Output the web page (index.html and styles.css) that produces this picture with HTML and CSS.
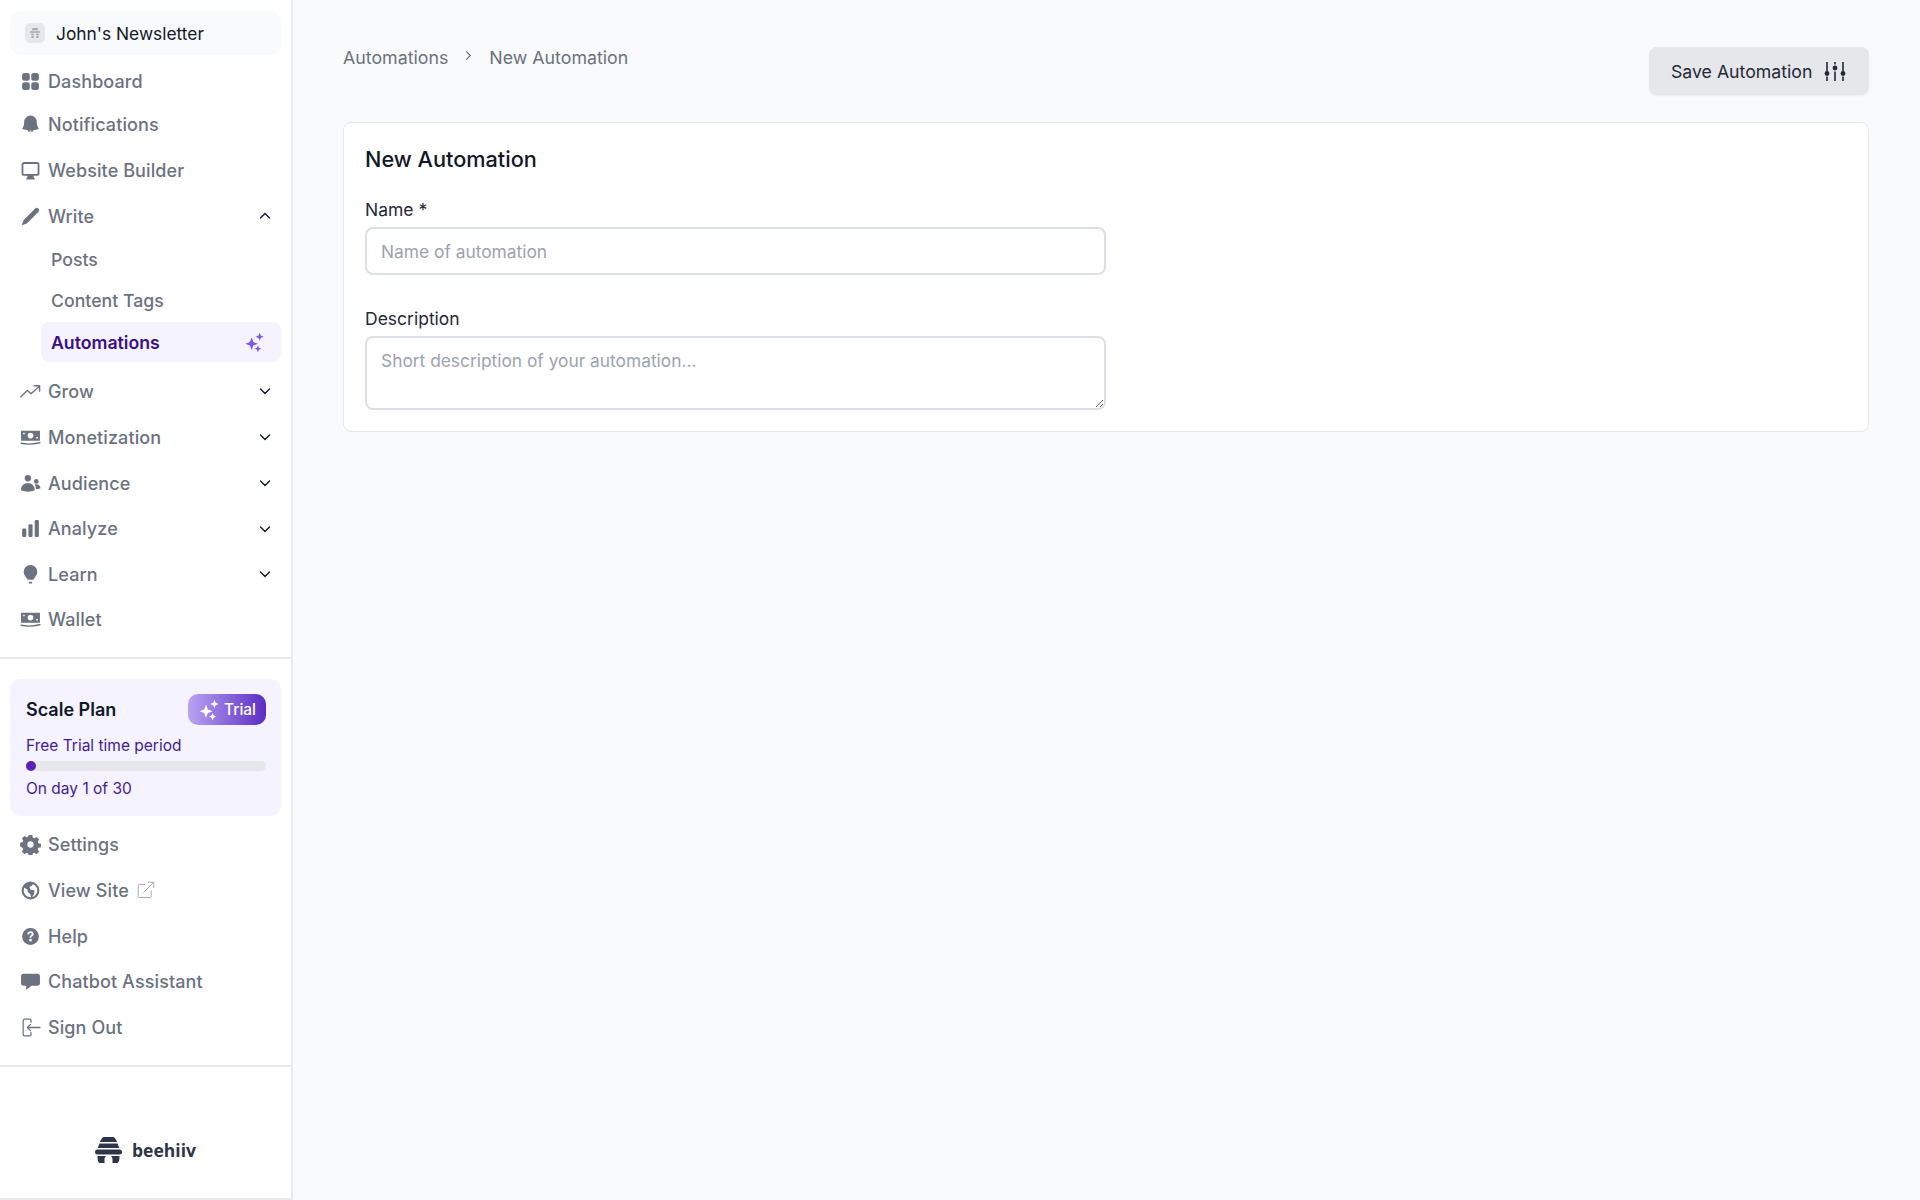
FILE: index.html
```html
<!DOCTYPE html>
<html lang="en">
<head>
<meta charset="utf-8">
<title>New Automation</title>
<link rel="stylesheet" href="styles.css">
</head>
<body>
<div class="app">
<aside class="sidebar">
  <div class="sidebar-top">
    <div class="publication">
      <span class="pub-icon"><svg viewBox="0 0 20 20" width="14" height="14"><path class="pub-glyph" d="M7 3h6l2 3H5zM3 7.500h14v2H3zM4.500 11h4v2h-4zM11.500 11h4v2h-4zM5 14h3v3H5zM12 14h3v3h-3z"/></svg></span>
      <span>John's Newsletter</span>
    </div>
    <nav class="nav-main">
      <a class="nav-row h42"><svg class="ico" viewBox="0 0 20 20"><rect x="2" y="2" width="7.300" height="7.300" rx="2.400"/><rect x="10.700" y="2" width="7.300" height="7.300" rx="2.400"/><rect x="2" y="10.700" width="7.300" height="7.300" rx="2.400"/><rect x="10.700" y="10.700" width="7.300" height="7.300" rx="2.400"/></svg><span>Dashboard</span></a>
      <a class="nav-row h44"><svg class="ico" viewBox="0 0 20 20"><path d="M10 1.500a6 6 0 0 0-6 6c0 2.500-.6 4.400-1.700 6a.7.700 0 0 0 .5 1.100c1.400.3 2.800.5 4.300.6a3 3 0 0 0 5.800 0c1.500-.1 2.900-.3 4.300-.6a.7.700 0 0 0 .5-1.100c-1.100-1.600-1.700-3.500-1.700-6a6 6 0 0 0-6-6zM8.500 15.900h3a1.600 1.600 0 0 1-3 0z"/></svg><span>Notifications</span></a>
      <a class="nav-row mt1"><svg class="ico" viewBox="0 0 20 20"><path fill-rule="evenodd" d="M4 2h12a2.500 2.500 0 0 1 2.500 2.500v8A2.500 2.500 0 0 1 16 15h-3v1.500l1 1v1H6v-1l1-1V15H4a2.500 2.500 0 0 1-2.500-2.500v-8A2.500 2.500 0 0 1 4 2zm0 1.700a.8.800 0 0 0-.8.800v8c0 .4.400.8.800.8h12c.4 0 .8-.4.800-.8v-8a.8.800 0 0 0-.8-.8z"/></svg><span>Website Builder</span></a>
      <a class="nav-row"><svg class="ico" viewBox="0 0 20 20"><path d="M14.500 2.300a2 2 0 0 1 2.800 0l.4.400a2 2 0 0 1 0 2.800L7 16.200a3 3 0 0 1-1.300.8l-4 1.300 1.300-4a3 3 0 0 1 .8-1.300z"/></svg><span>Write</span><svg class="chev" viewBox="0 0 12 12"><path d="M1.500 8 6 3.500 10.500 8"/></svg></a>
      <div class="subnav">
        <a class="sub-row">Posts</a>
        <a class="sub-row">Content Tags</a>
        <a class="sub-row active"><span>Automations</span><svg class="sparkle" viewBox="0 0 20 20"><path d="M7.500 5.500 9 9.500l4 1.500-4 1.500-1.500 4-1.500-4L2 11l4-1.500zM14.500 1.500l1 2.500 2.500 1-2.500 1-1 2.500-1-2.500L11 5l2.500-1zM13 12.500l.9 2.100 2.100.9-2.100.9-.9 2.100-.9-2.100-2.100-.9 2.100-.9z"/></svg></a>
      </div>
      <a class="nav-row mt6"><svg class="ico" viewBox="0 0 20 20"><path class="line" d="M.8 15 7 9l3.500 3.200L18.500 5M13.500 4.500h5.200v5"/></svg><span>Grow</span><svg class="chev" viewBox="0 0 12 12"><path d="M1.500 4 6 8.500 10.500 4"/></svg></a>
      <a class="nav-row"><svg class="ico" viewBox="0 0 20 20"><path fill-rule="evenodd" d="M1 3.500h18v9.500H1zM10 5.500a2.700 2.700 0 1 0 0 5.400 2.700 2.700 0 0 0 0-5.400zM3 5.500v1.500h1.500V5.500zM15.500 9.500V11H17V9.500z"/><path class="line" d="M1 15.500c5 1.200 10 1.200 18-.5"/></svg><span>Monetization</span><svg class="chev" viewBox="0 0 12 12"><path d="M1.500 4 6 8.500 10.500 4"/></svg></a>
      <a class="nav-row"><svg class="ico" viewBox="0 0 20 20"><circle cx="7.500" cy="5" r="3"/><circle cx="15.500" cy="8" r="2.200"/><path d="M1 16c0-3.800 2.800-6.500 6.500-6.500S14 12.200 14 16c0 1-3 1.800-6.500 1.800S1 17 1 16zM15 15.500c.3-1.800-.2-3.200-1-4.500 2.800-.8 5.400.8 5.500 3.300 0 .6-2.200 1.100-4.500 1.200z"/></svg><span>Audience</span><svg class="chev" viewBox="0 0 12 12"><path d="M1.500 4 6 8.500 10.500 4"/></svg></a>
      <a class="nav-row h45"><svg class="ico" viewBox="0 0 20 20"><rect x="2" y="10" width="4" height="8" rx="1.200"/><rect x="8" y="6" width="4" height="12" rx="1.200"/><rect x="14" y="2" width="4" height="16" rx="1.200"/></svg><span>Analyze</span><svg class="chev" viewBox="0 0 12 12"><path d="M1.500 4 6 8.500 10.500 4"/></svg></a>
      <a class="nav-row"><svg class="ico" viewBox="0 0 20 20"><path d="M10 1a6.500 6.500 0 0 0-6.500 6.500c0 2.800 1.900 4.200 3 6.200.4.700.8 1.300 1.500 1.300h4c.7 0 1.100-.6 1.500-1.300 1.100-2 3-3.400 3-6.200A6.500 6.500 0 0 0 10 1zM8.500 17h3v1.600h-3z"/></svg><span>Learn</span><svg class="chev" viewBox="0 0 12 12"><path d="M1.500 4 6 8.500 10.500 4"/></svg></a>
      <a class="nav-row h45"><svg class="ico" viewBox="0 0 20 20"><path fill-rule="evenodd" d="M1 3.500h18v9.500H1zM10 5.500a2.700 2.700 0 1 0 0 5.400 2.700 2.700 0 0 0 0-5.400zM3 5.500v1.500h1.500V5.500zM15.500 9.500V11H17V9.500z"/><path class="line" d="M1 15.500c5 1.200 10 1.200 18-.5"/></svg><span>Wallet</span></a>
    </nav>
  </div>
  <div class="sidebar-mid">
    <div class="plan">
      <div class="plan-head">
        <span class="plan-name">Scale Plan</span>
        <span class="trial"><svg viewBox="0 0 20 20" width="24" height="24"><path d="M7.500 5.500 9 9.500l4 1.500-4 1.500-1.500 4-1.500-4L2 11l4-1.500zM14.500 1.500l1 2.500 2.500 1-2.500 1-1 2.500-1-2.500L11 5l2.500-1zM13 12.500l.9 2.100 2.100.9-2.100.9-.9 2.100-.9-2.100-2.100-.9 2.100-.9z"/></svg>Trial</span>
      </div>
      <div class="plan-text">Free Trial time period</div>
      <div class="track"><span class="dot"></span></div>
      <div class="plan-text">On day 1 of 30</div>
    </div>
    <nav class="nav-bottom">
      <a class="nav-row"><svg class="ico" viewBox="0 0 20 20"><path fill-rule="evenodd" d="M8.300 1h3.400l.5 2.400 1.500.7 2.100-1.300 2.400 2.400-1.300 2.100.6 1.500 2.500.5v3.400l-2.500.5-.6 1.500 1.300 2.100-2.400 2.400-2.100-1.300-1.500.6-.5 2.500H8.300l-.5-2.500-1.500-.6-2.100 1.300-2.400-2.400 1.300-2.100-.7-1.500L0 11.700V8.300l2.400-.5.7-1.500-1.300-2.100 2.400-2.400 2.100 1.300 1.500-.7zM10 7a3 3 0 1 0 0 6 3 3 0 0 0 0-6z"/></svg><span>Settings</span></a>
      <a class="nav-row"><svg class="ico" viewBox="0 0 20 20"><circle class="line wide" cx="10" cy="10" r="7.500"/><path d="M6 3.500c2-1.200 4-1.200 6.500-.5l-1 2.500-2.500 1 1 2.500 3.800 1-.5 3.500-2.300 3.500-1.500-4-2.200-1.500v-2.200L3.500 7z"/></svg><span>View Site</span><svg class="ext" viewBox="0 0 18 18"><path d="M8 3.500H2.200a1 1 0 0 0-1 1v11a1 1 0 0 0 1 1h11a1 1 0 0 0 1-1V9.500M6.500 11.500 16.500 1.500M11 1.200h5.800V7"/></svg></a>
      <a class="nav-row"><svg class="ico" viewBox="0 0 20 20"><path fill-rule="evenodd" d="M10 2a8 8 0 1 1 0 16 8 8 0 0 1 0-16zm0 10.200a1.200 1.200 0 0 0 0 2.600 1.200 1.200 0 0 0 0-2.600zM7 8h1.800c0-.8.500-1.300 1.200-1.300s1.200.4 1.200 1c0 .5-.3.800-.9 1.200-.8.500-1.200 1.100-1.200 2.300h1.700c0-.7.200-1 .9-1.400.8-.5 1.300-1.200 1.300-2.200 0-1.500-1.200-2.600-3-2.600S7 6.100 7 8z"/></svg><span>Help</span></a>
      <a class="nav-row h45"><svg class="ico" viewBox="0 0 20 20"><path d="M3.500 2.500h13A2.500 2.500 0 0 1 19 5v6.500a2.500 2.500 0 0 1-2.500 2.500H11c-1.800 1.400-3.400 2.700-4.800 3.500-.4.200-.7 0-.6-.5l.4-3H3.500A2.500 2.500 0 0 1 1 11.500V5a2.500 2.500 0 0 1 2.500-2.500z"/></svg><span>Chatbot Assistant</span></a>
      <a class="nav-row"><svg class="ico" viewBox="0 0 20 20"><path class="line thin" d="M10.500 5V3.400c0-.7-.6-1.300-1.300-1.300H4.300c-.7 0-1.300.6-1.300 1.300v13.200c0 .7.600 1.300 1.300 1.300h4.900c.7 0 1.300-.6 1.300-1.300V15M19 10H7M10 7l-3 3 3 3"/></svg><span>Sign Out</span></a>
    </nav>
  </div>
  <div class="brand">
    <svg viewBox="0 0 27 26" width="27" height="26"><path class="logo" d="M9 0h9c1.500 0 3 2 4 5H5c1-3 2.500-5 4-5zM4.500 6.500h18l1.800 4.500H2.700zM2.500 12.500h22a2.500 2.500 0 0 1 0 5h-22a2.500 2.500 0 0 1 0-5zM2.500 19h9c-1.500.5-2 2-2 3.500V26H5c-1.500 0-2.500-2-2.500-7zM15.500 19h9c0 5-1 7-2.500 7h-4.500v-3.500c0-1.500-.5-3-2-3.500z"/></svg>
    <span>beehiiv</span>
  </div>
</aside>
<main class="main">
  <header class="topbar">
    <div class="crumbs">
      <span>Automations</span>
      <svg class="crumb-sep" viewBox="0 0 12 12"><path d="M3.500 1.500 8 6l-4.500 4.500"/></svg>
      <span>New Automation</span>
    </div>
    <button class="save">Save Automation
      <svg viewBox="0 0 22 21" width="22" height="21"><path class="sliders" d="M3 1v9M3 15.500V20M11 1v2.500M11 10.500V20M19 1v9M19 15.500V20"/><circle class="knob" cx="3" cy="12.500" r="2.400"/><circle class="knob" cx="11" cy="7" r="2.400"/><circle class="knob" cx="19" cy="12.500" r="2.400"/></svg>
    </button>
  </header>
  <section class="card">
    <h1>New Automation</h1>
    <div class="field">
      <label for="name">Name *</label>
      <input id="name" type="text" placeholder="Name of automation">
    </div>
    <div class="field second">
      <label for="desc">Description</label>
      <textarea id="desc" placeholder="Short description of your automation..."></textarea>
    </div>
  </section>
</main>
</div>
</body>
</html>
```
FILE: styles.css
```css
* { box-sizing: border-box; }
html, body { margin: 0; height: 100%; }
body { font-family: Inter, "Liberation Sans", sans-serif; color: #111827; background: #f9fafc; -webkit-font-smoothing: antialiased; }
.app { display: flex; height: 1200px; }
.sidebar { width: 293px; height: 1200px; flex: none; background: #fff; border-right: 2px solid #e9ebef; border-bottom: 2px solid #e9ebef; display: flex; flex-direction: column; }
.sidebar-top { padding: 11px 10px 0; height: 659px; border-bottom: 2px solid #e9ebef; }
.publication { height: 44px; display: flex; align-items: center; gap: 11px; padding-left: 15px; background: #f9fafb; border-radius: 10px; font-size: 17.350px; color: #111827; }
.pub-icon { width: 20px; height: 20px; border-radius: 5px; background: #e5e7eb; display: flex; align-items: center; justify-content: center; }
.pub-glyph { fill: #a3a8b2; }
.nav-main { margin-top: 5px; }
.nav-row { display: flex; align-items: center; height: 46px; padding-left: 10px; padding-right: 10px; font-size: 18px; letter-spacing: .1px; font-weight: 500; color: #6b7280; }
.nav-row.h42 { height: 42px; }
.nav-row.h44 { height: 44px; }
.nav-row.h45 { height: 45px; }
.nav-row.mt1 { margin-top: 1px; }
.nav-row.mt6 { margin-top: 6px; }
.ico { width: 21px; height: 21px; flex: none; margin-right: 7px; fill: #6b7280; }
.line { fill: none; stroke: #6b7280; stroke-width: 1.300; stroke-linecap: round; stroke-linejoin: round; }
.line.thin { stroke-width: 1.200; }
.line.wide { stroke-width: 2; }
.chev { width: 12px; height: 12px; margin-left: auto; fill: none; stroke: #111827; stroke-width: 1.400; stroke-linecap: round; stroke-linejoin: round; }
.ext { width: 18px; height: 18px; margin-left: 8px; fill: none; stroke: #a6abb5; stroke-width: 1; }
.subnav { padding-left: 31px; }
.sub-row { display: flex; align-items: center; height: 40px; padding: 0 10px; font-size: 17.700px; font-weight: 500; color: #6b7280; }
.sub-row + .sub-row { margin-top: 1px; }
.sub-row.active { margin-top: 2px; color: #3b0f83; background: #f5f3ff; border-radius: 8px; font-weight: 600; justify-content: space-between; }
.sparkle { width: 23px; height: 23px; fill: #7c5ce6; margin-right: 5px; }
.sidebar-mid { padding: 20px 10px 0; height: 408px; border-bottom: 2px solid #e9ebef; }
.plan { height: 137px; background: #f5f3ff; border-radius: 10px; padding: 15px 15px 15px 16px; }
.plan-head { display: flex; align-items: center; justify-content: space-between; margin-bottom: 11px; }
.plan-name { font-size: 18px; font-weight: 600; color: #111827; }
.trial { display: flex; align-items: center; gap: 3px; height: 31px; padding: 0 10px 0 9px; border-radius: 10px; background: linear-gradient(90deg, #b9a3f2, #5b2cc4); color: #fff; font-size: 15.500px; font-weight: 500; }
.trial svg { fill: #fff; }
.plan-text { font-size: 15.500px; line-height: 20px; color: #431a96; }
.track { position: relative; height: 10px; margin: 5px 0 8px; border-radius: 5px; background: #e5e7eb; }
.dot { display: block; width: 10px; height: 10px; border-radius: 50%; background: #5b21b6; }
.nav-bottom { margin-top: 5px; }
.brand { flex: 1; display: flex; align-items: center; justify-content: center; gap: 10px; font-family: "Open Sans", sans-serif; font-weight: 700; font-size: 17.500px; color: #2d3648; padding-top: 34px; }
.logo { fill: #2d3648; }
.main { flex: 1; padding: 47px 51px 0 50px; min-width: 0; }
.topbar { display: flex; justify-content: space-between; align-items: flex-start; height: 75px; }
.crumbs { display: flex; align-items: center; gap: 15px; height: 20px; font-size: 17.800px; color: #6b7280; }
.crumb-sep { width: 11px; height: 11px; margin-top: -3px; fill: none; stroke: #6b7280; stroke-width: 1.300; }
.save { display: flex; align-items: center; gap: 12px; width: 220px; height: 48px; padding: 0 21px 0 22px; border: 0; border-radius: 8px; background: #e5e7eb; font-family: inherit; font-size: 17.700px; color: #1f2937; box-shadow: 0 1px 2px rgba(0,0,0,.05); white-space: nowrap; }
.sliders { fill: none; stroke: #1f2937; stroke-width: 1.600; }
.knob { fill: #1f2937; }
.card { width: 1526px; height: 310px; padding: 21px 20px 0 21px; background: #fff; border: 1px solid #e5e7eb; border-radius: 8px; }
.card h1 { margin: 0 0 25px; font-size: 21.700px; line-height: 30px; font-weight: 500; color: #111827; }
.field label { display: block; font-size: 17.500px; line-height: 21px; margin-bottom: 7px; color: #1f2937; }
.field.second { margin-top: 33px; }
.field input, .field textarea { display: block; width: 741px; border: 2px solid #dcdfe4; border-radius: 8px; padding: 0 14px; background: #fff; font-family: inherit; font-size: 17.350px; color: #111827; }
.field input { height: 48px; }
.field textarea { height: 74px; padding-top: 12px; resize: vertical; }
.field input::placeholder, .field textarea::placeholder { color: #9ca3af; opacity: 1; }
```
